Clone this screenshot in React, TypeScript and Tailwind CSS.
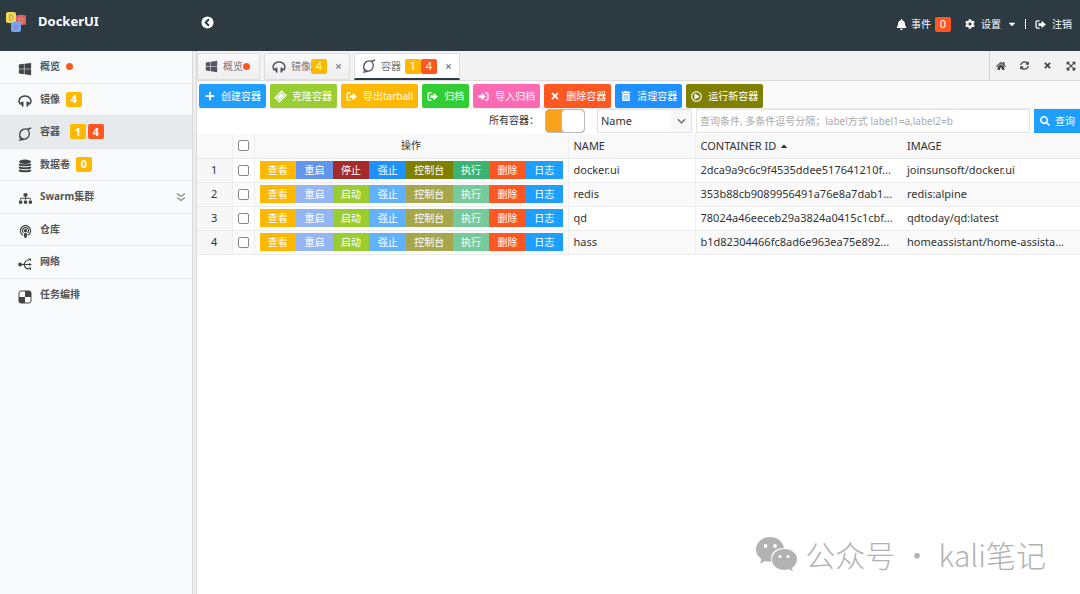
import type { ReactNode } from "react"
import {
  FaBell,
  FaCaretDown,
  FaCaretUp,
  FaCog,
  FaHome,
  FaPlus,
  FaPodcast,
  FaRegPlayCircle,
  FaSearch,
  FaSitemap,
  FaSyncAlt,
  FaTicketAlt,
  FaTimes,
  FaTrashAlt,
  FaWindows,
  FaExpandArrowsAlt,
} from "react-icons/fa"

const CIRCLE = "M3 12.5C1 11 1 4.500 5.500 2.500C8.500 1.200 11.500 2.500 12 6C12.500 9.500 10.500 13 6.500 13C4.800 13 3 12.500 2.500 10M9 2.500C11 2.300 13 2 14 .8M1 14C3 14 5 13.600 7 13"

function Logo() {
  return (
    <svg viewBox="0 0 22 22" className="size-[22px]" aria-hidden="true">
      <rect x="11" y="4" width="10" height="10" rx="2" fill="#d9636b" />
      <rect x="1" y="1" width="10" height="11" rx="2" fill="#f3d75c" />
      <rect x="6" y="11" width="10" height="10" rx="2" fill="#6fa8f5" />
      <path d="M4.500 4v5h1.500a2 2.500 0 0 0 0-5z" fill="none" stroke="#a9a65a" />
      <path d="M14.500 7v5h1.500a2 2.500 0 0 0 0-5z" fill="none" stroke="#e69a4d" />
      <path d="M9 19l2-5.500 2 5.500M9.700 17.500h2.600" fill="none" stroke="#a678c8" />
    </svg>
  )
}

function HeadphoneIcon() {
  return (
    <svg viewBox="0 0 14 14" className="size-[14px]" aria-hidden="true">
      <path d="M2.600 10.500C-.5 7.500 1.500 2 7 2s7.500 5.500 4.400 8.500" fill="none" stroke="currentColor" strokeWidth="1.500" />
      <path d="M2.200 8.300l3.300-.8v5l-1.300.3zM11.800 8.300l-3.300-.8v5l1.300.3z" fill="currentColor" />
    </svg>
  )
}

function ContainerIcon() {
  return (
    <svg viewBox="0 0 15 15" className="size-[14px]" aria-hidden="true">
      <path d={CIRCLE} fill="none" stroke="currentColor" strokeWidth="1.400" />
    </svg>
  )
}

function VolumeIcon() {
  return (
    <svg viewBox="0 0 14 14" className="size-[14px]" aria-hidden="true">
      <ellipse cx="7" cy="2.700" rx="6" ry="2.200" fill="currentColor" />
      <path
        d="M1.200 5c1.500 1.800 10 1.800 11.600 0M1.200 8c1.500 1.800 10 1.800 11.600 0M1.200 11c1.500 1.800 10 1.800 11.600 0"
        fill="none"
        stroke="currentColor"
        strokeWidth="2"
      />
    </svg>
  )
}

function NetworkIcon() {
  return (
    <svg viewBox="0 0 14 14" className="size-[14px]" aria-hidden="true">
      <circle cx="2.200" cy="7.500" r="2" fill="currentColor" />
      <path d="M2 7.500h10M6 7.500C7 4 8 3 11 3M6 7.500C7 11 8 12 11 12" fill="none" stroke="currentColor" strokeWidth="1.200" />
      <path d="M10 1.500h3v3zM11 6l3 1.500L11 9zM10 10.500h3v3z" fill="currentColor" />
    </svg>
  )
}

function CheckerIcon() {
  return (
    <svg viewBox="0 0 14 14" className="size-[14px]" aria-hidden="true">
      <rect x="1" y="1" width="12" height="12" rx="2" fill="#fff" stroke="currentColor" />
      <path d="M7 1h4a2 2 0 0 1 2 2v4H7zM1 7h6v6H3a2 2 0 0 1-2-2z" fill="currentColor" />
    </svg>
  )
}

function ExitIcon() {
  return (
    <svg viewBox="0 0 12 12" className="size-[11px]" aria-hidden="true">
      <path d="M5 2H2.500Q1.200 2 1.200 3.300v5.400Q1.200 10 2.500 10H5" fill="none" stroke="currentColor" strokeWidth="1.400" />
      <path d="M3.800 4.500h3.400V2L11.800 6 7.200 10V7.500H3.800z" fill="currentColor" />
    </svg>
  )
}

function EnterIcon() {
  return (
    <svg viewBox="0 0 12 12" className="size-[11px]" aria-hidden="true">
      <path d="M7.500 2H9.500Q10.800 2 10.800 3.300v5.400Q10.800 10 9.500 10H7.500" fill="none" stroke="currentColor" strokeWidth="1.400" />
      <path d="M.5 4.500h3.500V2L8.500 6 4 10V7.500H.5z" fill="currentColor" />
    </svg>
  )
}

function Badge({ color, children }: { color: string; children: ReactNode }) {
  return (
    <span className={`flex h-[15px] w-4 items-center justify-center rounded-[2px] text-[11px] text-white ${color}`}>
      {children}
    </span>
  )
}

const menu = [
  { label: "概览", icon: <FaWindows size={14} />, extra: <i className="size-[7px] rounded-full bg-[#ff5722]" /> },
  { label: "镜像", icon: <HeadphoneIcon />, extra: <Badge color="bg-[#ffb800]">4</Badge> },
  {
    label: "容器",
    icon: <ContainerIcon />,
    active: true,
    extra: (
      <span className="ml-1 flex gap-[2px]">
        <Badge color="bg-[#ffb800]">1</Badge>
        <Badge color="bg-[#ff5722]">4</Badge>
      </span>
    ),
  },
  { label: "数据卷", icon: <VolumeIcon />, extra: <Badge color="bg-[#ffb800]">0</Badge> },
  { label: "Swarm集群", icon: <FaSitemap size={13} />, open: true },
  { label: "仓库", icon: <FaPodcast size={13} /> },
  { label: "网络", icon: <NetworkIcon /> },
  { label: "任务编排", icon: <CheckerIcon /> },
]

const actions = [
  { label: "创建容器", icon: <FaPlus size={10} />, color: "bg-[#1e9fff]" },
  { label: "克隆容器", icon: <FaTicketAlt size={11} className="-rotate-45" />, color: "bg-[#9acd32]" },
  { label: "导出tarball", icon: <ExitIcon />, color: "bg-[#ffb800]" },
  { label: "归档", icon: <ExitIcon />, color: "bg-[#32cd32]" },
  { label: "导入归档", icon: <EnterIcon />, color: "bg-[#ff69b4]" },
  { label: "删除容器", icon: <FaTimes size={10} />, color: "bg-[#ff5722]" },
  { label: "清理容器", icon: <FaTrashAlt size={10} />, color: "bg-[#1e90ff]" },
  { label: "运行新容器", icon: <FaRegPlayCircle size={11} />, color: "bg-[#808000]" },
]

const containers = [
  { name: "docker.ui", id: "2dca9a9c6c9f4535ddee517641210f...", image: "joinsunsoft/docker.ui", running: true },
  { name: "redis", id: "353b88cb9089956491a76e8a7dab1...", image: "redis:alpine", running: false },
  { name: "qd", id: "78024a46eeceb29a3824a0415c1cbf...", image: "qdtoday/qd:latest", running: false },
  { name: "hass", id: "b1d82304466fc8ad6e963ea75e892...", image: "homeassistant/home-assista...", running: false },
]

function RowButtons({ running }: { running: boolean }) {
  const buttons = [
    ["查看", "bg-[#ffb800]"],
    ["重启", running ? "bg-[#6495ed]" : "bg-[#93b5f2]"],
    running ? ["停止", "bg-[#a52a2a]"] : ["启动", "bg-[#9acd32]"],
    ["强止", running ? "bg-[#1e90ff]" : "bg-[#62b1ff]"],
    ["控制台", running ? "bg-[#808000]" : "bg-[#a6a64d]"],
    ["执行", running ? "bg-[#3cb371]" : "bg-[#77ca9c]"],
    ["删除", "bg-[#ff5722]"],
    ["日志", "bg-[#1e9fff]"],
  ]
  return (
    <div className="flex h-[18px]">
      {buttons.map(([label, color]) => (
        <button key={label} type="button" className={`grow px-2 text-[10px] leading-[18px] text-white ${color}`}>
          {label}
        </button>
      ))}
    </div>
  )
}

function Tab({ icon, label, active, children }: { icon: ReactNode; label: string; active?: boolean; children: ReactNode }) {
  return (
    <div
      className={`flex h-[27px] items-center rounded-t-[2px] border border-[#dddddd] px-[7px] text-[#555566] ${
        active ? "border-b-2 border-b-[#2d3a41] bg-white" : "bg-linear-to-b from-[#f9f9f9] to-[#efefef]"
      }`}
    >
      {icon}
      <button type="button" className="ml-[5px] text-[10px] text-[#777777]">{label}</button>
      {children}
    </div>
  )
}

function CloseTab() {
  return (
    <button type="button" aria-label="关闭" className="ml-2 text-[#7b8794]">
      <FaTimes size={7} />
    </button>
  )
}

export default function App() {
  return (
    <div className="relative flex min-h-screen flex-col overflow-hidden bg-white font-['Noto_Sans','Noto_Sans_CJK_SC',sans-serif] text-[11px] text-[#333333]">
      {/* Header */}
      <header className="flex h-[51px] shrink-0 items-start bg-[#2d3a41] pt-[11px] text-white">
        <div className="flex w-[201px] items-center gap-[11px] pl-[5px]">
          <Logo />
          <h1 className="text-[13px] font-bold">DockerUI</h1>
        </div>
        <button type="button" aria-label="收起菜单" className="mt-[5px]">
          <svg viewBox="0 0 14 14" className="size-[13px]" aria-hidden="true">
            <circle cx="7" cy="7" r="6.500" fill="#fff" />
            <path d="M8.500 3.500L5 7l3.500 3.500" fill="none" stroke="#2d3a41" strokeWidth="2" />
          </svg>
        </button>
        <div className="ml-auto flex h-[26px] items-center pr-2 text-[10px]">
          <button type="button" className="mr-[14px] flex items-center gap-1">
            <FaBell size={11} />
            <span>事件</span>
            <Badge color="bg-[#ff5722]">0</Badge>
          </button>
          <button type="button" className="mr-2 flex items-center gap-[6px]">
            <FaCog size={10} />
            <span>设置</span>
            <FaCaretDown size={10} />
          </button>
          <span className="mr-[9px] h-[10px] w-px bg-white" />
          <button type="button" className="flex items-center gap-[6px]">
            <ExitIcon />
            <span>注销</span>
          </button>
        </div>
      </header>

      <div className="flex grow">
        {/* Side menu */}
        <aside className="w-[192px] shrink-0 bg-[#f9fafc]">
          <nav className="grid h-[260px] grid-rows-8">
            {menu.map((item) => (
              <a
                key={item.label}
                href="#"
                className={`flex items-center border-b border-[#e6e9ec] pr-[6px] pl-[18px] text-[10px] font-bold text-[#555555] last:border-b-0 ${
                  item.active ? "bg-[#e6eaec]" : ""
                }`}
              >
                <span className="mr-2 flex w-[14px] justify-center pt-1 text-[#444444]">{item.icon}</span>
                <span className="mr-[6px]">{item.label}</span>
                {item.extra}
                {item.open && (
                  <svg viewBox="0 0 10 10" className="ml-auto size-[10px]" aria-hidden="true">
                    <path d="M1 1.500l4 3 4-3M1 5.500l4 3 4-3" fill="none" stroke="#888" strokeWidth="1.300" />
                  </svg>
                )}
              </a>
            ))}
          </nav>
        </aside>
        <div className="w-[5px] shrink-0 border-r border-l border-[#d9d9d9] bg-[#eeeeee]" />

        <main className="min-w-0 grow overflow-hidden">
          {/* Tabs */}
          <div className="flex h-[30px] items-end justify-between border-b border-[#dddddd] bg-[#f2f2f2]">
            <div className="flex gap-1">
              <Tab icon={<FaWindows size={13} />} label="概览">
                <i className="mr-[2px] size-[7px] rounded-full bg-[#ff5722]" />
              </Tab>
              <Tab icon={<HeadphoneIcon />} label="镜像">
                <Badge color="bg-[#ffb800]">4</Badge>
                <CloseTab />
              </Tab>
              <Tab icon={<ContainerIcon />} label="容器" active>
                <span className="ml-1 flex">
                  <Badge color="bg-[#ffb800]">1</Badge>
                  <Badge color="bg-[#ff5722]">4</Badge>
                </span>
                <CloseTab />
              </Tab>
            </div>
            <div className="flex h-full items-center gap-[14px] border-l border-[#d5d5d5] pr-1 pl-[6px] text-[#444444]">
              <button type="button" aria-label="首页"><FaHome size={10} /></button>
              <button type="button" aria-label="刷新"><FaSyncAlt size={9} /></button>
              <button type="button" aria-label="关闭全部"><FaTimes size={9} /></button>
              <button type="button" aria-label="全屏"><FaExpandArrowsAlt size={10} /></button>
            </div>
          </div>

          {/* Toolbar */}
          <div className="flex gap-1 border-b border-[#eeeeee] bg-[#fafafa] px-[2px] pt-[3px]">
            {actions.map((a) => (
              <button
                key={a.label}
                type="button"
                className={`flex h-6 shrink-0 items-center gap-[6px] rounded-[2px] px-[5px] text-[10px] text-white ${a.color}`}
              >
                <span className="flex w-[11px] justify-center">{a.icon}</span>
                {a.label}
              </button>
            ))}
          </div>

          {/* Search */}
          <form className="flex h-[25px] pl-[292px]">
            <span id="all-label" className="w-14 shrink-0 text-[10px] leading-[22px]">所有容器：</span>
            <button
              type="button"
              role="switch"
              aria-checked="true"
              aria-labelledby="all-label"
              className="flex h-6 w-10 shrink-0 justify-end overflow-hidden rounded-[4px] border border-[#bbbbbb] bg-[#f8a21e]"
            >
              <span className="h-full w-[23px] rounded-[4px] border-l border-[#bbbbbb] bg-white" />
            </button>
            <div className="relative ml-3 h-6 w-[95px] shrink-0">
              <select aria-label="查询字段" className="h-full w-full appearance-none border border-[#e3e3e3] bg-white pl-[3px] text-[11px]">
                <option>Name</option>
              </select>
              <span className="pointer-events-none absolute top-px right-px flex h-[22px] w-5 items-center justify-center bg-[#f7f7f7]">
                <svg viewBox="0 0 10 6" className="h-[6px] w-[9px]" aria-hidden="true">
                  <path d="M1 1l4 4 4-4" fill="none" stroke="#777" strokeWidth="1.800" />
                </svg>
              </span>
            </div>
            <input
              type="text"
              aria-label="查询条件"
              placeholder="查询条件, 多条件逗号分隔；label方式 label1=a,label2=b"
              className="ml-1 h-6 min-w-0 grow border border-[#e3e3e3] px-[3px] text-[10px] placeholder:text-[#aaaaaa]"
            />
            <button type="button" className="ml-1 flex h-6 w-[46px] shrink-0 items-center gap-[5px] bg-[#1e9fff] pl-[6px] text-[10px] whitespace-nowrap text-white">
              <FaSearch size={10} />
              查询
            </button>
          </form>

          {/* Containers */}
          <table className="w-full table-fixed border-collapse text-left">
            <colgroup>
              <col className="w-[35px]" />
              <col className="w-[22px]" />
              <col className="w-[314px]" />
              <col className="w-[127px]" />
              <col className="w-[207px]" />
              <col />
            </colgroup>
            <thead>
              <tr className="h-6 border-b border-[#e6e6e6] bg-[#f9f9f9]">
                <th className="border-r border-[#eeeeee]" />
                <th className="border-r border-[#eeeeee] p-0">
                  <input type="checkbox" aria-label="全选" className="mx-auto block size-[11px] appearance-none rounded-[2px] border border-[#888888] bg-white" />
                </th>
                <th className="border-r border-[#eeeeee] p-0 text-center text-[10px] font-normal">操作</th>
                <th className="border-r border-[#eeeeee] py-0 pl-[5px] font-normal">NAME</th>
                <th className="py-0 pl-[5px] font-normal">
                  <span className="flex items-center gap-[3px]">
                    CONTAINER ID <FaCaretUp size={10} />
                  </span>
                </th>
                <th className="py-0 pl-[5px] font-normal">IMAGE</th>
              </tr>
            </thead>
            <tbody>
              {containers.map((c, i) => (
                <tr key={c.name} className="h-6 border-b border-[#eeeeee] even:bg-[#fafafa]">
                  <td className="border-r border-[#eeeeee] bg-[#f7f7f7] p-0 text-center">{i + 1}</td>
                  <td className="border-r border-[#eeeeee] p-0">
                    <input type="checkbox" aria-label={c.name} className="mx-auto block size-[11px] appearance-none rounded-[2px] border border-[#888888] bg-white" />
                  </td>
                  <td className="border-r border-[#eeeeee] px-[5px] py-0">
                    <RowButtons running={c.running} />
                  </td>
                  <td className="border-r border-[#eeeeee] py-0 pl-[5px]">{c.name}</td>
                  <td className="truncate py-0 pl-[5px]">{c.id}</td>
                  <td className="truncate py-0 pl-[5px]">{c.image}</td>
                </tr>
              ))}
            </tbody>
          </table>
        </main>
      </div>

      {/* Watermark */}
      <div className="pointer-events-none absolute right-[34px] bottom-5 flex items-center gap-2 text-[#b2b2b2]">
        <svg viewBox="0 0 42 36" className="h-9 w-[42px]" fill="currentColor" aria-hidden="true">
          <path d="M15 1C7 1 1 6.500 1 13.500c0 4 2 7.200 5.400 9.500L5 27.500l5-2.500c2 .6 4 .9 6.500.8C14.500 18 20 12 29 12 28 5.500 22 1 15 1z" />
          <path d="M29.500 13C22.500 13 17 17.500 17 23.500S22.500 34 29.500 34c1.600 0 3-.2 4.500-.7l4 2.200-1.100-3.600C39.800 29.800 42 27 42 23.500 42 17.500 36.500 13 29.500 13z" />
          <g fill="#fff">
            <circle cx="10.500" cy="10" r="1.900" />
            <circle cx="20" cy="10" r="1.900" />
            <circle cx="25" cy="20.500" r="1.600" />
            <circle cx="33" cy="20.500" r="1.600" />
          </g>
        </svg>
        <span className="font-['Noto_Sans_CJK_SC',sans-serif] text-[30px] leading-10 font-light">公众号 · kali笔记</span>
      </div>
    </div>
  )
}
